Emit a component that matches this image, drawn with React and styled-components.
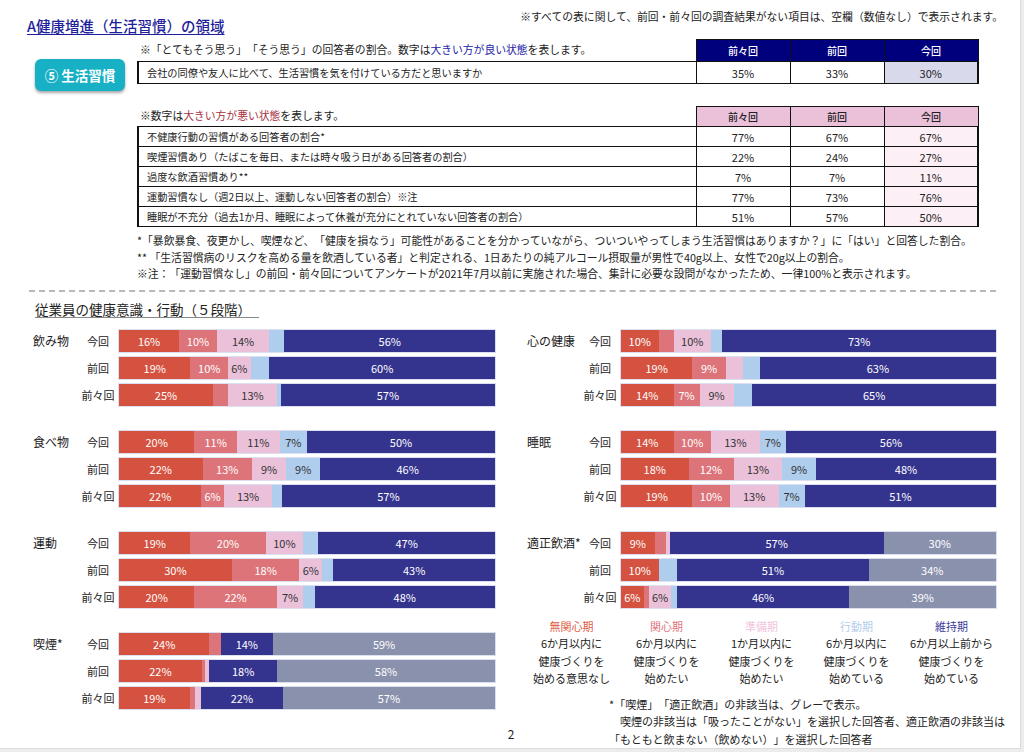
import React from "react";
import styled, { createGlobalStyle } from "styled-components";

const FONT = `"Noto Sans CJK JP", "Noto Sans", sans-serif`;

const GlobalStyle = createGlobalStyle`
  html, body { margin: 0; padding: 0; background: #ececec; }
  body { font-family: ${FONT}; color: #222; text-spacing-trim: space-all; }
  * { box-sizing: border-box; }
`;

const Page = styled.div`
  width: 1021px;
  height: 749px;
  background: #fff;
  border-right: 1px solid #dcdcdc;
  border-bottom: 1px solid #dcdcdc;
  display: flex;
  flex-direction: column;
  overflow: hidden;
`;

const TopBar = styled.div`
  display: flex;
  justify-content: space-between;
  height: 39px;
  padding: 0 17px 0 27px;
`;

const Title = styled.h1`
  margin: 0;
  padding-top: 17px;
  font-size: 14.5px;
  line-height: 18px;
  font-weight: 500;
  color: #1f1f9c;
  text-decoration: underline;
  text-underline-offset: 2px;
`;

const TopNote = styled.div`
  padding-top: 8px;
  font-size: 10.8px;
  line-height: 16px;
  white-space: nowrap;
`;

const SectionA = styled.div`
  display: flex;
  gap: 12px;
  padding-left: 35px;
`;

const Badge = styled.div`
  width: 90px;
  height: 32px;
  margin-top: 20px;
  border-radius: 6px;
  background: #17b0c5;
  color: #fff;
  font-size: 13.5px;
  font-weight: 700;
  display: flex;
  align-items: center;
  justify-content: center;
  box-shadow: 0 2px 3px rgba(0, 0, 0, 0.35);
`;

const TablesCol = styled.div`
  width: 840px;
  display: flex;
  flex-direction: column;
`;

const Table = styled.table`
  width: 840px;
  border-collapse: collapse;
  table-layout: fixed;
  margin-top: ${(p) => p.$mt || 0}px;
`;

const NoteCell = styled.th`
  text-align: left;
  font-weight: 400;
  font-size: 10.8px;
  padding: 0 0 3px 2px;
  border: none;
  white-space: nowrap;
`;

const HeadCell = styled.th`
  height: ${(p) => p.$h}px;
  background: ${(p) => p.$bg};
  color: ${(p) => p.$fg};
  font-size: 10px;
  font-weight: 500;
  text-align: center;
  border: 1.5px solid #111;
  padding: 0;
`;

const LabelCell = styled.td`
  height: ${(p) => p.$h}px;
  border: 1px solid #111;
  border-left: 2.5px solid #111;
  padding: 0 0 0 8px;
  font-size: 10.2px;
  white-space: nowrap;
`;

const ValueCell = styled.td`
  border: 1px solid #111;
  border-right: ${(p) => (p.$last ? "2px" : "1px")} solid #111;
  background: ${(p) => p.$bg || "#fff"};
  text-align: center;
  font-size: 11px;
  padding: 0;
`;

const Good = styled.span`
  color: #2323a8;
`;
const Bad = styled.span`
  color: #a8323e;
`;

const Footnotes = styled.div`
  margin-top: 5px;
  font-size: 10.8px;
  line-height: 16.5px;
  white-space: nowrap;
`;

const Divider = styled.div`
  margin: 8px 0 0 29px;
  width: 967px;
  border-top: 2px dashed #b8b8b8;
`;

const SectionTitle = styled.h2`
  margin: 9px 0 0 35px;
  align-self: flex-start;
  font-size: 13.5px;
  font-weight: 400;
  line-height: 16px;
  padding-right: 8px;
  border-bottom: 1.5px solid #888;
`;

const ChartsGrid = styled.div`
  flex: 1;
  display: grid;
  grid-template-columns: 462px 32px 469px;
  margin: 12px 0 0 33px;
`;

const ChartCol = styled.div`
  display: flex;
  flex-direction: column;
  gap: 25px;
`;

const Middle = styled.div`
  display: flex;
  align-items: flex-end;
  justify-content: center;
  padding-bottom: 7px;
  font-size: 12px;
  line-height: 14px;
`;

const Group = styled.div`
  display: flex;
  flex-direction: column;
  gap: 5px;
`;

const BarRow = styled.div`
  display: grid;
  grid-template-columns: ${(p) => p.$cat}px 36px 1fr;
  column-gap: 0;
  height: 22px;
  align-items: center;
`;

const CatLabel = styled.div`
  font-size: 12px;
  white-space: nowrap;
`;

const RowLabel = styled.div`
  font-size: 11px;
  text-align: center;
  white-space: nowrap;
`;

const Bar = styled.div`
  margin-left: 3px;
  height: 22px;
  display: flex;
  box-shadow: 0 0 0 1px #dcdff0;
`;

const Seg = styled.div`
  flex: ${(p) => p.$v} 1 0;
  min-width: 0;
  background: ${(p) => p.$bg};
  color: ${(p) => p.$fg};
  font-size: 11px;
  display: flex;
  align-items: center;
  justify-content: center;
  overflow: hidden;
  white-space: nowrap;
`;

const Legend = styled.div`
  margin: 10px 0 0 -3px;
  display: grid;
  grid-template-columns: repeat(5, 95px);
  font-size: 11px;
  line-height: 17.5px;
  text-align: center;
`;

const LegendTitle = styled.div`
  color: ${(p) => p.$c};
`;

const Notes = styled.div`
  margin: 8px 0 0 82px;
  font-size: 11px;
  line-height: 17.5px;
  white-space: nowrap;
`;

const NoteLine = styled.div`
  padding-left: ${(p) => p.$indent || 0}px;
`;

const COLORS = [
  ["#d4523f", "#fff"],
  ["#dc7479", "#fff"],
  ["#ebc1da", "#333"],
  ["#afcdec", "#333"],
  ["#34338e", "#fff"],
  ["#8a91ad", "#fff"],
];

const ROWS = ["今回", "前回", "前々回"];

const LEFT = [
  {
    name: "飲み物",
    rows: [
      [16, 10, 14, 4, 56, 0],
      [19, 10, 6, 5, 60, 0],
      [25, 4, 13, 1, 57, 0],
    ],
  },
  {
    name: "食べ物",
    rows: [
      [20, 11.4, 11.3, 7.3, 50, 0],
      [22, 13, 9, 9, 46, 0],
      [22, 6, 13, 2.5, 57, 0],
    ],
  },
  {
    name: "運動",
    rows: [
      [19, 20, 10, 4, 47, 0],
      [30, 18, 6, 3, 43, 0],
      [20, 22, 7, 3, 48, 0],
    ],
  },
  {
    name: "喫煙*",
    rows: [
      [24, 3, 0, 0, 14, 59],
      [22, 1, 1, 0, 18, 58],
      [19, 1.5, 1.5, 0, 22, 57],
    ],
  },
];

const RIGHT = [
  {
    name: "心の健康",
    rows: [
      [10, 4, 10, 3, 73, 0],
      [19, 9, 4.5, 4.5, 63, 0],
      [14, 7, 9, 5, 65, 0],
    ],
  },
  {
    name: "睡眠",
    rows: [
      [14, 10, 13, 7, 56, 0],
      [18, 12, 13, 9, 48, 0],
      [19, 10, 13, 7, 51, 0],
    ],
  },
  {
    name: "適正飲酒*",
    rows: [
      [9, 3, 1, 0, 57, 30],
      [10, 0, 0, 5, 51, 34],
      [6, 1.4, 6, 1.4, 46, 39],
    ],
  },
];

const LEGEND = [
  ["無関心期", "#e05a47", ["6か月以内に", "健康づくりを", "始める意思なし"]],
  ["関心期", "#df737c", ["6か月以内に", "健康づくりを", "始めたい"]],
  ["準備期", "#f1c3dc", ["1か月以内に", "健康づくりを", "始めたい"]],
  ["行動期", "#b3cdea", ["6か月以内に", "健康づくりを", "始めている"]],
  ["維持期", "#3b3b9c", ["6か月以上前から", "健康づくりを", "始めている"]],
];

const T2 = [
  ["不健康行動の習慣がある回答者の割合*", "77%", "67%", "67%"],
  ["喫煙習慣あり（たばこを毎日、または時々吸う日がある回答者の割合）", "22%", "24%", "27%"],
  ["過度な飲酒習慣あり**", "7%", "7%", "11%"],
  ["運動習慣なし（週2日以上、運動しない回答者の割合）※注", "77%", "73%", "76%"],
  ["睡眠が不充分（過去1か月、睡眠によって休養が充分にとれていない回答者の割合）", "51%", "57%", "50%"],
];

function ChartGroup({ group, cat }) {
  return (
    <Group>
      {group.rows.map((vals, i) => (
        <BarRow key={i} $cat={cat}>
          <CatLabel>{i === 0 ? group.name : ""}</CatLabel>
          <RowLabel>{ROWS[i]}</RowLabel>
          <Bar>
            {vals.map((v, k) =>
              v > 0 ? (
                <Seg key={k} $v={v} $bg={COLORS[k][0]} $fg={COLORS[k][1]}>
                  {v >= 6 ? `${Math.round(v)}%` : ""}
                </Seg>
              ) : null
            )}
          </Bar>
        </BarRow>
      ))}
    </Group>
  );
}

function Cols() {
  return (
    <colgroup>
      <col style={{ width: 558 }} />
      <col style={{ width: 94 }} />
      <col style={{ width: 94 }} />
      <col style={{ width: 94 }} />
    </colgroup>
  );
}

export default function App() {
  return (
    <>
      <GlobalStyle />
      <Page>
        <TopBar>
          <Title>A健康増進（生活習慣）の領域</Title>
          <TopNote>
            ※すべての表に関して、前回・前々回の調査結果がない項目は、空欄（数値なし）で表示されます。
          </TopNote>
        </TopBar>

        <SectionA>
          <Badge>⑤ 生活習慣</Badge>
          <TablesCol>
            <Table>
              <Cols />
              <thead>
                <tr>
                  <NoteCell>
                    ※「とてもそう思う」「そう思う」の回答者の割合。数字は<Good>大きい方が良い状態</Good>を表します。
                  </NoteCell>
                  {["前々回", "前回", "今回"].map((h) => (
                    <HeadCell key={h} $h={22} $bg="#00007c" $fg="#fff">
                      {h}
                    </HeadCell>
                  ))}
                </tr>
              </thead>
              <tbody>
                <tr>
                  <LabelCell $h={22}>
                    会社の同僚や友人に比べて、生活習慣を気を付けている方だと思いますか
                  </LabelCell>
                  <ValueCell>35%</ValueCell>
                  <ValueCell>33%</ValueCell>
                  <ValueCell $last $bg="#d9d9ec">
                    30%
                  </ValueCell>
                </tr>
              </tbody>
            </Table>

            <Table $mt={22}>
              <Cols />
              <thead>
                <tr>
                  <NoteCell>
                    ※数字は<Bad>大きい方が悪い状態</Bad>を表します。
                  </NoteCell>
                  {["前々回", "前回", "今回"].map((h) => (
                    <HeadCell key={h} $h={20} $bg="#ebc1da" $fg="#222">
                      {h}
                    </HeadCell>
                  ))}
                </tr>
              </thead>
              <tbody>
                {T2.map((r) => (
                  <tr key={r[0]}>
                    <LabelCell $h={20}>{r[0]}</LabelCell>
                    <ValueCell>{r[1]}</ValueCell>
                    <ValueCell>{r[2]}</ValueCell>
                    <ValueCell $last $bg="#fcf0f6">
                      {r[3]}
                    </ValueCell>
                  </tr>
                ))}
              </tbody>
            </Table>

            <Footnotes>
              <div>
                *「暴飲暴食、夜更かし、喫煙など、「健康を損なう」可能性があることを分かっていながら、ついついやってしまう生活習慣はありますか？」に「はい」と回答した割合。
              </div>
              <div>
                ** 「生活習慣病のリスクを高める量を飲酒している者」と判定される、1日あたりの純アルコール摂取量が男性で40g以上、女性で20g以上の割合。
              </div>
              <div>
                ※注：「運動習慣なし」の前回・前々回についてアンケートが2021年7月以前に実施された場合、集計に必要な設問がなかったため、一律100%と表示されます。
              </div>
            </Footnotes>
          </TablesCol>
        </SectionA>

        <Divider />
        <SectionTitle>従業員の健康意識・行動（５段階）</SectionTitle>

        <ChartsGrid>
          <ChartCol>
            {LEFT.map((g) => (
              <ChartGroup key={g.name} group={g} cat={47} />
            ))}
          </ChartCol>
          <Middle>2</Middle>
          <div>
            <ChartCol>
              {RIGHT.map((g) => (
                <ChartGroup key={g.name} group={g} cat={55} />
              ))}
            </ChartCol>
            <Legend>
              {LEGEND.map(([t, c, lines]) => (
                <div key={t}>
                  <LegendTitle $c={c}>{t}</LegendTitle>
                  {lines.map((l) => (
                    <div key={l}>{l}</div>
                  ))}
                </div>
              ))}
            </Legend>
            <Notes>
              <NoteLine>*「喫煙」「適正飲酒」の非該当は、グレーで表示。</NoteLine>
              <NoteLine $indent={11}>
                喫煙の非該当は「吸ったことがない」を選択した回答者、適正飲酒の非該当は
              </NoteLine>
              <NoteLine>「もともと飲まない（飲めない）」を選択した回答者</NoteLine>
            </Notes>
          </div>
        </ChartsGrid>
      </Page>
    </>
  );
}
